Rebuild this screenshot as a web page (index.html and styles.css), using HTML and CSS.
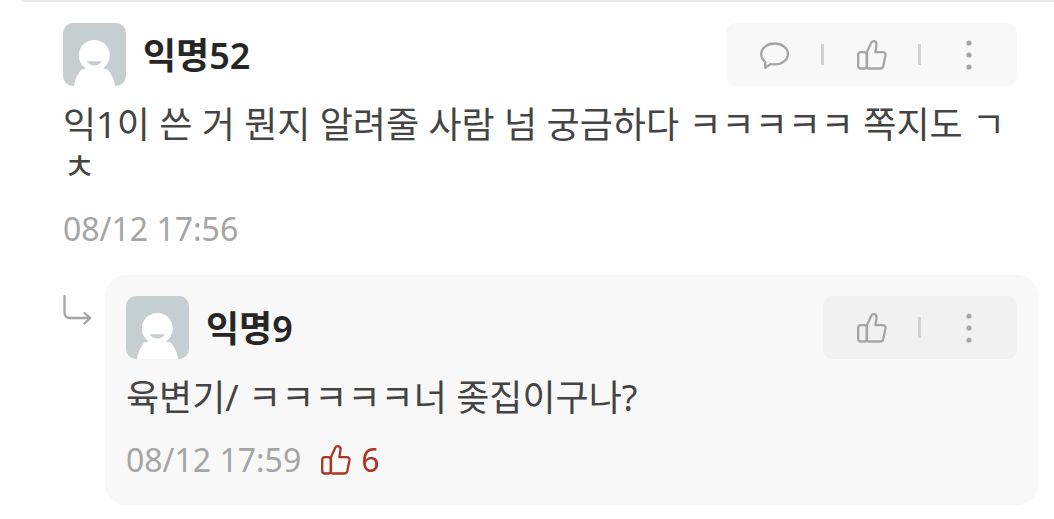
FILE: index.html
```
<!DOCTYPE html>
<html lang="ko">
<head>
  <meta charset="utf-8">
  <meta name="viewport" content="width=device-width, initial-scale=1">
  <title>댓글</title>
  <link rel="stylesheet" href="styles.css">
</head>

<body>
  <!-- shared icons -->
  <svg class="sprite" aria-hidden="true">
    <symbol id="avatar" viewBox="0 0 63 63">
      <rect width="63" height="63" fill="#c5ced1"/>
      <path d="M11 63C12 55 16 48 22 43H41C47 48 51 55 52 63Z" fill="#fff"/>
      <circle cx="31.3" cy="32.5" r="15.5" fill="#fff"/>
      <path d="M17.5 40.2Q19.5 43.4 22.5 45.2L20.2 46.5L15 44Z" fill="#c5ced1"/>
      <path d="M45.1 40.2Q43.1 43.4 40.1 45.2L42.4 46.5L47.6 44Z" fill="#c5ced1"/>
      <path d="M23.5 38.2H39Q36 42.4 31.3 42.4T23.5 38.2Z" fill="#c5ced1"/>
    </symbol>
    <symbol id="bubble" viewBox="0 0 30 30">
      <path d="M5.2 21.8C2.7 19.8 1.2 17 1.2 14C1.2 8.1 7.2 3.5 14.6 3.5S28 8.1 28 14S22 24.4 14.6 24.4C13.2 24.4 11.9 24.3 10.7 24L5.2 27.9Z"/>
    </symbol>
    <symbol id="thumb" viewBox="0 0 30 30">
      <rect x="1.2" y="12.2" width="8.8" height="16.3" rx="2.8"/>
      <path d="M9.8 12.6L14.1 3Q15.2 .9 17.2 1.2Q19.7 1.9 19.5 4.6L18.4 12.2H25.6Q28.8 12.3 28.5 15.2L26.3 26Q25.7 28.5 23.2 28.5H11.5Q9.9 28.4 9.8 26.5Z"/>
    </symbol>
    <symbol id="more" viewBox="0 0 30 30">
      <circle cx="15" cy="3" r="2.6"/>
      <circle cx="15" cy="15" r="2.6"/>
      <circle cx="15" cy="27" r="2.6"/>
    </symbol>
    <symbol id="reply-arrow" viewBox="0 0 30 30">
      <path d="M1.5 1V17Q1.5 23 7 23H27M21.5 18L27.2 23L21.5 28.5"/>
    </symbol>
  </svg>

  <main class="comments">
    <article class="comment">
      <header class="comment-head">
        <svg class="avatar" aria-hidden="true"><use href="#avatar"/></svg>
        <h2 class="name">익명52</h2>
        <div class="actions">
          <button type="button" aria-label="답글"><svg class="icon"><use href="#bubble"/></svg></button>
          <button type="button" aria-label="추천"><svg class="icon"><use href="#thumb"/></svg></button>
          <button type="button" aria-label="더보기"><svg class="icon icon-more"><use href="#more"/></svg></button>
        </div>
      </header>
      <p class="text">익1이 쓴 거 뭔지 알려줄 사람 넘 궁금하다 ㅋㅋㅋㅋㅋ 쪽지도 ㄱㅊ</p>
      <div class="meta">
        <time>08/12 17:56</time>
      </div>
    </article>

    <div class="reply">
      <svg class="icon reply-arrow" aria-hidden="true"><use href="#reply-arrow"/></svg>
      <article class="comment reply-box">
        <header class="comment-head">
          <svg class="avatar" aria-hidden="true"><use href="#avatar"/></svg>
          <h2 class="name">익명9</h2>
          <div class="actions">
            <button type="button" aria-label="추천"><svg class="icon"><use href="#thumb"/></svg></button>
            <button type="button" aria-label="더보기"><svg class="icon icon-more"><use href="#more"/></svg></button>
          </div>
        </header>
        <p class="text">육변기/ ㅋㅋㅋㅋㅋ너 좆집이구나?</p>
        <div class="meta">
          <time>08/12 17:59</time>
          <span class="likes"><svg class="icon" aria-hidden="true"><use href="#thumb"/></svg>6</span>
        </div>
      </article>
    </div>
  </main>
</body>

</html>
```
FILE: styles.css
```
* {
  box-sizing: border-box;
}

body {
  margin: 0;
  background-color: #fefefe;
  color: #444;
  font-family: "Noto Sans", "Noto Sans CJK KR", sans-serif;
}

.sprite {
  position: absolute;
  width: 0;
  height: 0;
}

.comments {
  margin-left: 21px;
  padding: 21px 16px 14px 42px;
  border-top: 2px solid #ebebeb;
}

.comments > .comment {
  padding-right: 21px;
}

.comment-head {
  display: flex;
  align-items: center;
}

.avatar {
  flex: none;
  width: 63px;
  height: 63px;
  border-radius: 10px;
}

.name {
  margin: 0 0 0 17px;
  padding-top: 2px;
  color: #262626;
  font-size: 36px;
  line-height: 42px;
  font-weight: 600;
}

.actions {
  display: flex;
  margin-left: auto;
  border-radius: 10px;
  background-color: #f8f8f8;
}

.actions button {
  display: flex;
  align-items: center;
  justify-content: center;
  width: 97px;
  height: 63px;
  padding: 0;
  border: none;
  background: none;
  color: #a5a5a5;
  cursor: pointer;
}

/* short divider between buttons */
.actions button + button::before {
  content: "";
  width: 3px;
  height: 21px;
  margin-left: -2px;
  margin-right: auto;
  background-color: #d2d2d2;
}

.actions button + button .icon {
  margin-right: auto;
}

.icon {
  flex: none;
  width: 30px;
  height: 30px;
  fill: none;
  stroke: currentColor;
  stroke-width: 2.3;
  stroke-linecap: round;
  stroke-linejoin: round;
}

.icon-more {
  fill: currentColor;
  stroke: none;
}

.text {
  margin: 18px 0 20px;
  font-size: 36px;
  line-height: 42px;
}

.meta {
  display: flex;
  align-items: center;
  gap: 20px;
  color: #a5a5a5;
  font-size: 32px;
  line-height: 42px;
}

.likes {
  display: flex;
  align-items: center;
  gap: 10px;
  color: #ab3424;
}

.reply {
  display: flex;
  gap: 12px;
  margin-top: 25px;
}

.reply-arrow {
  margin-top: 20px;
  color: #a5a5a5;
}

.reply-box {
  flex: 1;
  padding: 21px 21px 24px;
  border-radius: 21px;
  background-color: #f8f8f8;
}

.reply-box .actions {
  background-color: #f1f1f1;
}
```
